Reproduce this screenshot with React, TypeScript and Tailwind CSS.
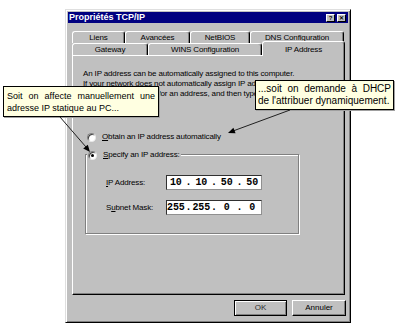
import React from 'react';

// Win95-style "Propriétés TCP/IP" dialog with two callouts

const Radio = ({ checked = false }: { checked?: boolean }) => (
  <span className="w-[9px] h-[9px] shrink-0 rounded-full bg-white border border-t-[#808080] border-l-[#808080] border-r-[#e8e8e8] border-b-[#e8e8e8] shadow-[inset_1px_1px_0_#404040] flex items-center justify-center">
    {checked && <span className="w-[3px] h-[3px] rounded-full bg-black" />}
  </span>
);

const Tab = ({ label, className }: { label: string; className: string }) => (
  <div
    className={`${className} h-full flex items-center justify-center rounded-t-[3px] border-l border-t border-white border-r border-r-black shadow-[inset_-1px_0_0_#808080] text-[8px] tracking-[-0.15px]`}
  >
    {label}
  </div>
);

const IpField = ({ parts }: { parts: string[] }) => (
  <div className="w-[96px] h-[15px] bg-white border border-t-[#303030] border-l-[#303030] border-r-[#909090] border-b-[#909090] flex items-center font-['Liberation_Mono',monospace] font-bold text-[10px] text-black">
    {parts.map((p, i) => (
      <React.Fragment key={i}>
        {i > 0 && <span className="w-[8px] text-center">.</span>}
        <span className="w-[18px] text-center">{p}</span>
      </React.Fragment>
    ))}
  </div>
);

export default function App() {
  return (
    <div className="relative w-[400px] h-[329px] bg-white overflow-hidden pt-[9px] font-['Liberation_Sans',Arial,sans-serif] text-black">
      {/* dialog window */}
      <div className="ml-[65px] w-[286px] h-[314px] p-[2px] bg-[#c0c0c0] border border-t-[#dfdfdf] border-l-[#dfdfdf] border-r-black border-b-black shadow-[inset_1px_1px_0_#fff,inset_-1px_-1px_0_#808080] flex flex-col">
        {/* title bar */}
        <div className="h-[11px] bg-[#000080] flex items-center justify-between pl-[1px] pr-[2px]">
          <span className="text-white font-bold text-[9px] leading-none">Propriétés TCP/IP</span>
          <div className="flex gap-[2px]">
            <span className="w-[9px] h-[8px] bg-[#c0c0c0] border-t border-l border-white border-r border-b border-r-black border-b-black flex items-center justify-center text-[6px] font-bold leading-none">?</span>
            <span className="w-[9px] h-[8px] bg-[#c0c0c0] border-t border-l border-white border-r border-b border-r-black border-b-black flex items-center justify-center text-[6px] font-bold leading-none">✕</span>
          </div>
        </div>

        {/* tabs */}
        <div className="mt-[8px] ml-[4px] mr-[3px] flex flex-col">
          <div className="h-[12px] flex">
            <Tab label="Liens" className="w-[53px]" />
            <Tab label="Avancées" className="w-[65px]" />
            <Tab label="NetBIOS" className="w-[60px]" />
            <Tab label="DNS Configuration" className="w-[94px]" />
          </div>
          <div className="relative z-10 h-[12px] flex items-start">
            <Tab label="Gateway" className="w-[76px]" />
            <Tab label="WINS Configuration" className="w-[114px]" />
            <div className="w-[83px] h-[15px] -mt-[2px] bg-[#c0c0c0] rounded-t-[3px] border-l border-t border-white border-r border-r-black shadow-[inset_-1px_0_0_#808080] flex items-start justify-center pt-[2px] text-[8px] tracking-[-0.15px]">
              IP Address
            </div>
          </div>

          {/* tab page */}
          <div className="h-[240px] border border-t-white border-l-white border-r-black border-b-black shadow-[inset_-1px_-1px_0_#808080] pt-[13px] pl-[10px] text-[8px] tracking-[-0.15px]">
            <div className="leading-[10px] whitespace-nowrap">
              <div>An IP address can be automatically assigned to this computer.</div>
              <div className="w-[172px] overflow-hidden">If your network does not automatically assign IP addresses, ask your</div>
              <div className="w-[172px] overflow-hidden">network administrator for an address, and then type it in</div>
            </div>

            <div className="mt-[33px] ml-[4px] h-[10px] flex items-center gap-[6px]">
              <Radio />
              <span>
                <span className="underline">O</span>btain an IP address automatically
              </span>
            </div>

            {/* group box */}
            <div className="relative mt-[12px] ml-[2px] w-[214px] h-[80px] border border-[#808080] shadow-[inset_1px_1px_0_#fff,1px_1px_0_#fff] pt-[20px] pl-[20px] flex flex-col gap-[10px]">
              <div className="absolute -top-[5px] left-[1px] h-[10px] bg-[#c0c0c0] px-[1px] flex items-center gap-[6px]">
                <Radio checked />
                <span>
                  <span className="underline">S</span>pecify an IP address:
                </span>
              </div>
              <div className="flex items-center">
                <span className="w-[60px]">
                  <span className="underline">I</span>P Address:
                </span>
                <IpField parts={['10', '10', '50', '50']} />
              </div>
              <div className="flex items-center">
                <span className="w-[60px]">
                  S<span className="underline">u</span>bnet Mask:
                </span>
                <IpField parts={['255', '255', '0', '0']} />
              </div>
            </div>
          </div>
        </div>

        {/* buttons */}
        <div className="mt-[5px] mr-[2px] flex justify-end gap-[5px] text-[8px]">
          <button className="w-[53px] h-[16px] bg-[#c0c0c0] border border-black shadow-[inset_1px_1px_0_#fff,inset_-1px_-1px_0_#808080] text-[#303030]">
            OK
          </button>
          <button className="w-[54px] h-[16px] bg-[#c0c0c0] border border-t-white border-l-white border-r-black border-b-black shadow-[inset_-1px_-1px_0_#808080]">
            Annuler
          </button>
        </div>
      </div>

      {/* callouts */}
      <div className="absolute left-[3px] top-[86px] w-[156px] h-[31px] bg-[#ffffe1] border border-black px-[3px] pt-[3px] text-[9px] leading-[12px] shadow-[1px_1px_0_#a0a0a0]">
        <div className="[text-align-last:justify]">Soit on affecte manuellement une</div>
        <div>adresse IP statique au PC...</div>
      </div>
      <div className="absolute left-[255px] top-[80px] w-[139px] h-[30px] bg-[#ffffe1] border border-black px-[2px] pt-[2px] text-[10px] leading-[12px] shadow-[1px_1px_0_#a0a0a0]">
        <div className="[text-align-last:justify]">...soit on demande à DHCP</div>
        <div>de l'attribuer dynamiquement.</div>
      </div>

      {/* arrows */}
      <svg className="absolute inset-0 pointer-events-none" width="400" height="329" viewBox="0 0 400 329">
        <line x1="60" y1="117" x2="86" y2="147" stroke="#202020" strokeWidth="1" />
        <polygon points="90,152 83.2,148.6 87.8,144.7" fill="#000" />
        <line x1="290" y1="110" x2="233" y2="131" stroke="#202020" strokeWidth="1" />
        <polygon points="228,133 235.6,133.3 233.4,127.7" fill="#000" />
      </svg>
    </div>
  );
}
